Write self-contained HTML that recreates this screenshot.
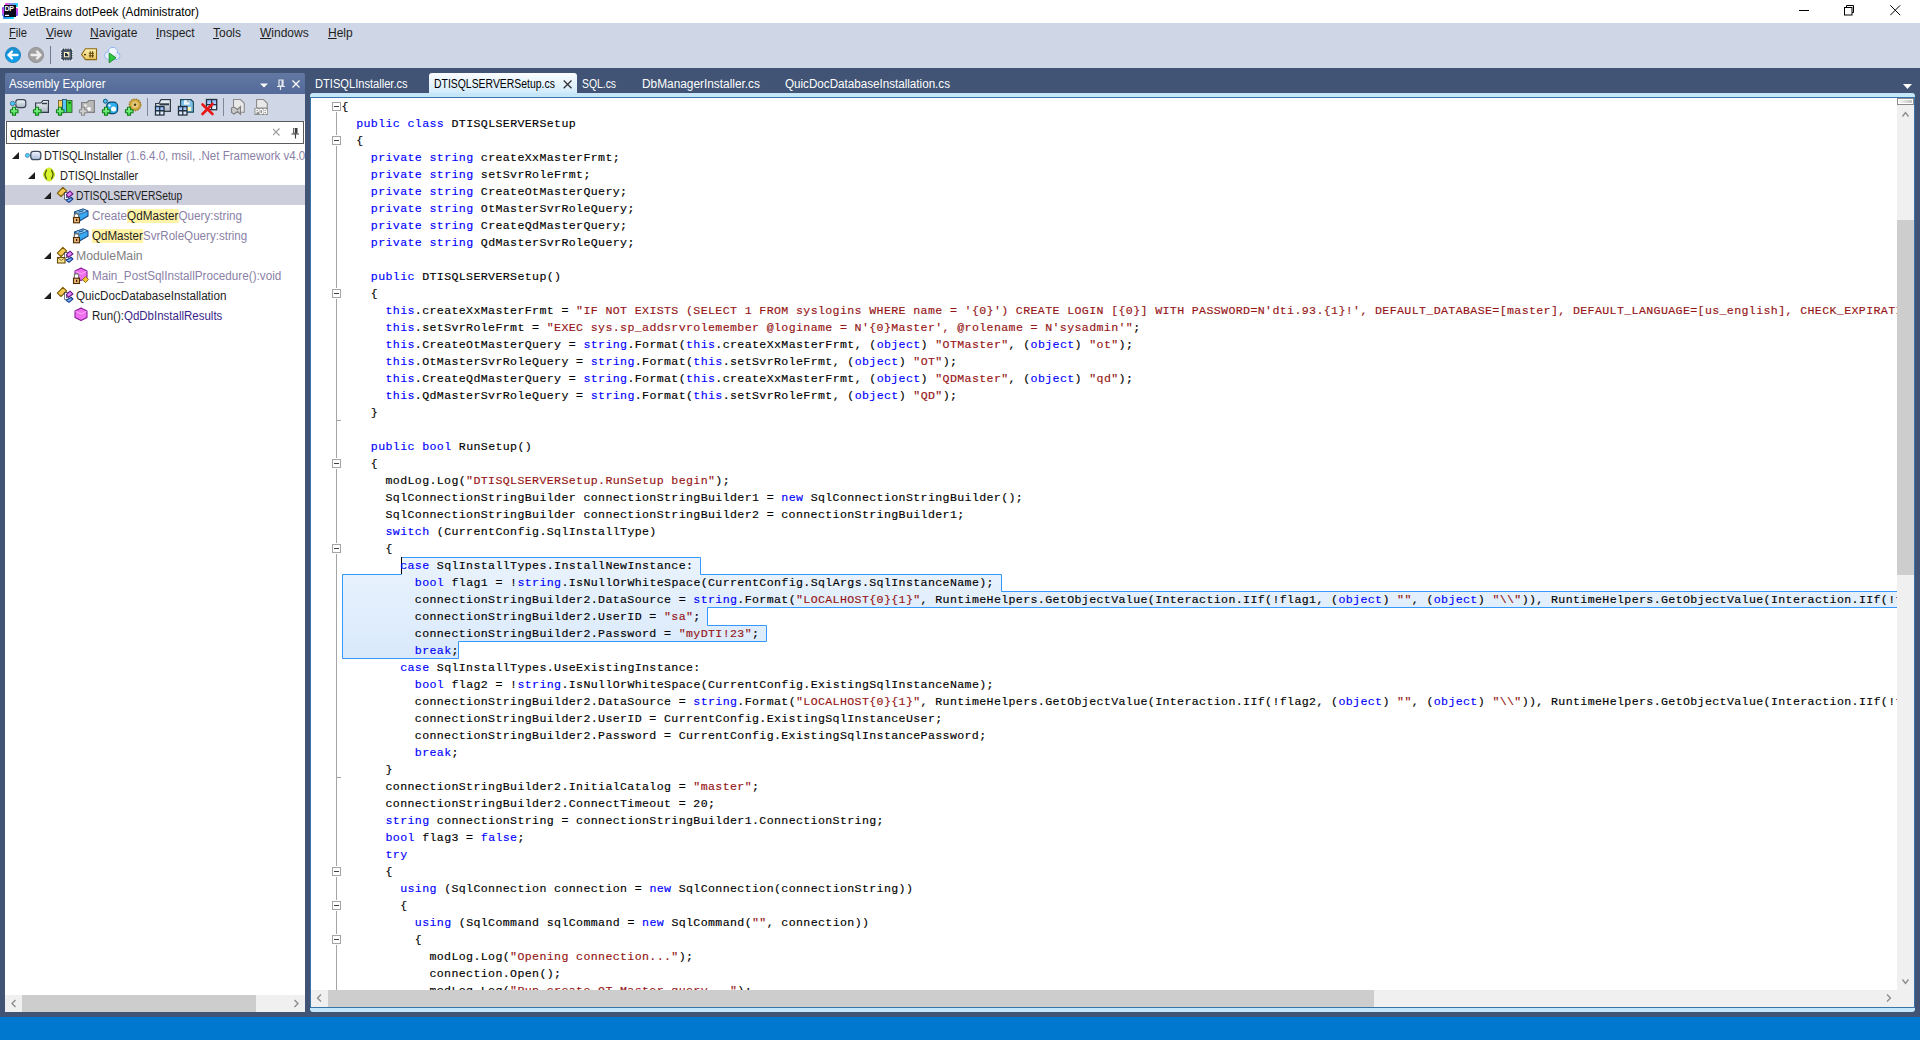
<!DOCTYPE html>
<html><head><meta charset="utf-8">
<style>
*{box-sizing:border-box}
html,body{margin:0;padding:0;overflow:hidden}
body{width:1920px;height:1040px;overflow:hidden;position:relative;background:#415475;font-family:"Liberation Sans",sans-serif;font-size:12px;color:#1e1e1e}
.a{position:absolute}
#title{left:0;top:0;width:1920px;height:23px;background:#fff}
#menubar{left:0;top:23px;width:1920px;height:45px;background:#cfd6e5}
#taskbar{left:0;top:1017px;width:1920px;height:23px;background:#0078d0}
.menu{position:absolute;top:26px;font-size:12px;color:#1e1e1e;white-space:nowrap}
.menu u{text-decoration:underline;text-decoration-thickness:1px;text-underline-offset:1px}
#panel{left:5px;top:73px;width:300px;height:939px;background:linear-gradient(transparent 0,transparent 21px,#fff 21px)}
#phead{left:0;top:0;width:300px;height:21px;background:linear-gradient(#6379a2,#52699a);border-radius:2px 2px 0 0}
#ptool{left:0;top:21px;width:300px;height:27px;background:#cfd6e5}
#search{left:1px;top:48px;width:298px;height:23px;border:1px solid #5c5c5c;background:#fff}
#tree{left:0;top:71px;width:300px;height:851px;background:#fff;overflow:hidden}
.row{position:absolute;left:0;width:300px;height:20px;white-space:nowrap}
.row .t{position:absolute;top:4px;font-size:12px}
.tri{position:absolute;width:0;height:0;border-left:7px solid transparent;border-bottom:7px solid #1e1e1e;top:7px}
.hl{background:#fff3a8}
.sx{display:inline-block;transform-origin:0 0;white-space:nowrap}
#edframe{left:310px;top:93px;width:1605px;height:919px;background:#c6e6fa;border-radius:3px}
#edin{left:310px;top:97px;width:1605px;height:911px;border:1px solid #3a73a9;background:#fff;overflow:hidden}
#code{position:absolute;left:30.5px;top:0px;font-family:"Liberation Mono",monospace;font-size:11.6px;letter-spacing:0.3725px;line-height:17px;white-space:pre;color:#000;-webkit-text-stroke:0.15px currentColor}
#code b{font-weight:normal;color:#0000ff}
#code i{font-style:normal;color:#951414}
.fb{position:absolute;width:9px;height:9px;border:1px solid #a5a5a5;background:#fff}
.fb:after{content:"";position:absolute;left:1px;top:3px;width:5px;height:1px;background:#404040}
.fl{position:absolute;width:1px;background:#a5a5a5}
.ft{position:absolute;width:5px;height:1px;background:#a5a5a5}
.tab{position:absolute;top:77px;font-size:12px;color:#fff;white-space:nowrap}
</style></head><body>
<div id="title" class="a">
  <svg class="a" style="left:0;top:0" width="22" height="22">
    <defs><linearGradient id="dp1" x1="0" y1="0" x2="1" y2="0"><stop offset="0" stop-color="#ff40e0"/><stop offset="1" stop-color="#10d8ff"/></linearGradient>
    <linearGradient id="dp2" x1="0" y1="0" x2="0" y2="1"><stop offset="0" stop-color="#8050ff"/><stop offset="0.5" stop-color="#e040f0"/><stop offset="1" stop-color="#6080ff"/></linearGradient>
    <linearGradient id="dp3" x1="0" y1="0" x2="0" y2="1"><stop offset="0" stop-color="#ff40e0"/><stop offset="1" stop-color="#7060ff"/></linearGradient>
    <linearGradient id="dp4" x1="0" y1="0" x2="1" y2="0"><stop offset="0" stop-color="#3080ff"/><stop offset="1" stop-color="#10e0ff"/></linearGradient></defs>
    <rect x="5" y="3" width="13" height="4" rx="1" fill="url(#dp1)"/>
    <rect x="2" y="7" width="3" height="9" rx="1" fill="url(#dp2)"/>
    <rect x="15" y="8" width="3" height="8" rx="1" fill="url(#dp3)"/>
    <rect x="3" y="15" width="11" height="4" rx="1" fill="url(#dp4)"/>
    <rect x="4" y="5" width="12" height="12" fill="#0c0a18"/>
    <text x="4.6" y="11.2" font-family="Liberation Sans" font-weight="bold" font-size="7" fill="#fff" textLength="9.4">DP</text>
    <rect x="5" y="14.8" width="4" height="1.2" fill="#fff"/>
  </svg>
  <div class="a" style="left:23px;top:5px;font-size:12px;color:#000;white-space:nowrap"><span class="sx" style="transform:scaleX(0.98)">JetBrains dotPeek (Administrator)</span></div>
  <div class="a" style="left:1799px;top:10px;width:10px;height:1px;background:#000"></div>
  <svg class="a" style="left:1844px;top:5px" width="11" height="11"><rect x="0.5" y="2.5" width="7.5" height="7.5" fill="none" stroke="#000"/><path d="M2.5 2.5 V0.5 H9.5 V7.5 H8" fill="none" stroke="#000"/></svg>
  <svg class="a" style="left:1890px;top:5px" width="11" height="11"><path d="M0.3 0.3 L10.2 10.2 M10.2 0.3 L0.3 10.2" stroke="#000" stroke-width="1"/></svg>
</div>
<div id="menubar" class="a"></div>
<div class="menu" style="left:9px"><span class="sx" style="transform:scaleX(0.93)"><u>F</u>ile</span></div>
<div class="menu" style="left:46px"><u>V</u>iew</div>
<div class="menu" style="left:90px"><u>N</u>avigate</div>
<div class="menu" style="left:156px"><u>I</u>nspect</div>
<div class="menu" style="left:213px"><u>T</u>ools</div>
<div class="menu" style="left:260px"><u>W</u>indows</div>
<div class="menu" style="left:328px"><u>H</u>elp</div>
<!-- main toolbar -->
<svg class="a" style="left:0;top:44px" width="130" height="22">
  <defs><linearGradient id="bk" x1="0" y1="0" x2="0" y2="1"><stop offset="0" stop-color="#1c8fd0"/><stop offset="1" stop-color="#0ca2f2"/></linearGradient>
  <linearGradient id="tg" x1="0" y1="0" x2="0" y2="1"><stop offset="0" stop-color="#fff0b0"/><stop offset="1" stop-color="#e8c860"/></linearGradient>
  <linearGradient id="cl" x1="0" y1="0" x2="0" y2="1"><stop offset="0" stop-color="#ffffff"/><stop offset="1" stop-color="#c8dcf8"/></linearGradient></defs>
  <circle cx="13" cy="11" r="7.6" fill="url(#bk)" stroke="#1479b8" stroke-width="0.8"/>
  <path d="M8.5 11 H17.5 M8.5 11 L12 7.5 M8.5 11 L12 14.5" stroke="#fff" stroke-width="2.3" fill="none" stroke-linecap="round" stroke-linejoin="round"/>
  <circle cx="36" cy="11" r="7.6" fill="#a0a0a0" stroke="#8a8a8a" stroke-width="0.8"/>
  <path d="M31.5 11 H40.5 M40.5 11 L37 7.5 M40.5 11 L37 14.5" stroke="#f0f0f0" stroke-width="2.3" fill="none" stroke-linecap="round" stroke-linejoin="round"/>
  <rect x="50" y="2" width="1" height="18" fill="#6e7a90"/>
  <rect x="60.6" y="4.5" width="12.3" height="12.3" fill="#f4f8fc" opacity="0.8"/>
  <path d="M63.5 4.5 V16.5 M65.8 4.5 V16.5 M68.1 4.5 V16.5 M70.4 4.5 V16.5" stroke="#2a3644" stroke-width="1.1"/>
  <path d="M61 7.2 H72.5 M61 9.5 H72.5 M61 11.8 H72.5 M61 14.1 H72.5" stroke="#2a3644" stroke-width="1.1"/>
  <rect x="62.2" y="5.9" width="9.2" height="9.2" fill="#4a5c6c" stroke="#2a3644" stroke-width="0.8"/>
  <rect x="64" y="8" width="5.4" height="5.2" fill="#fff0c0"/>
  <path d="M65 9 H66.5 L68.2 10.7 V12.2 H65 Z" fill="#1a2a3a"/>
  <path d="M81.5 10.5 L85.5 4.8 H96.5 V15.6 H85.5 Z" fill="url(#tg)" stroke="#8a6810" stroke-width="1.1" stroke-linejoin="round"/>
  <circle cx="85" cy="10.6" r="0.9" fill="#2a1a04"/>
  <path d="M90.2 7.2 V13.8 M92.6 7.2 V13.8 M88.8 9.3 H94 M88.8 11.8 H94" stroke="#5a4408" stroke-width="1"/>
  <circle cx="112.8" cy="8" r="4.6" fill="url(#cl)" stroke="#8ab0f0" stroke-width="1"/>
  <circle cx="108.2" cy="11.5" r="3.6" fill="url(#cl)" stroke="#8ab0f0" stroke-width="1"/>
  <circle cx="116.8" cy="12" r="3.2" fill="url(#cl)" stroke="#8ab0f0" stroke-width="1"/>
  <path d="M108.5 15.3 H117" stroke="#8ab0f0" stroke-width="1"/>
  <rect x="107" y="10.5" width="11" height="4.5" fill="#dce8fc"/>
  <circle cx="112.8" cy="8" r="4" fill="#f0f6ff"/><circle cx="108.2" cy="11.5" r="3" fill="#e4eefc"/><circle cx="116.8" cy="12" r="2.6" fill="#dde8fc"/>
  <path d="M109.2 9 L116 13.8 L109.2 18.8 Z" fill="#30c840" stroke="#148a24" stroke-width="0.9" stroke-linejoin="round"/>
</svg>
<div id="taskbar" class="a"></div>

<!-- Assembly explorer panel -->
<div id="panel" class="a">
  <div id="phead" class="a">
    <div class="a" style="left:4px;top:4px;color:#fff;font-size:12px;white-space:nowrap"><span class="sx" style="transform:scaleX(0.965)">Assembly Explorer</span></div>
    <svg class="a" style="left:250px;top:5px" width="50" height="14">
      <path d="M5 5.5 H13 L9 9.5 Z" fill="#fff"/>
      <path d="M24 2 H28 V8 H24 Z" stroke="#e8eaf0" stroke-width="1.2" fill="none"/><rect x="26.5" y="2" width="1.5" height="6" fill="#e8eaf0"/>
      <path d="M22 8.5 H30 M25.5 9 V12" stroke="#e8eaf0" stroke-width="1.2" fill="none"/>
      <path d="M37.5 2.5 L44.5 9.5 M44.5 2.5 L37.5 9.5" stroke="#fff" stroke-width="1.2"/>
    </svg>
  </div>
  <div id="ptool" class="a">
    <svg class="a" style="left:-5px;top:-1px" width="305" height="28">
    <defs><linearGradient id="pg" x1="0" y1="0" x2="0" y2="1"><stop offset="0" stop-color="#a8ffa8"/><stop offset="1" stop-color="#38d848"/></linearGradient>
    <linearGradient id="cg" x1="0" y1="0" x2="0" y2="1"><stop offset="0" stop-color="#7fb0ff"/><stop offset="1" stop-color="#ffffff"/></linearGradient>
    <linearGradient id="fg" x1="0" y1="0" x2="0" y2="1"><stop offset="0" stop-color="#f4f8fc"/><stop offset="1" stop-color="#a9b4c0"/></linearGradient>
    <radialGradient id="gg"><stop offset="0" stop-color="#fff2b0"/><stop offset="1" stop-color="#c09020"/></radialGradient></defs>
    <rect x="15.8" y="6.6" width="10" height="8" rx="2.5" fill="url(#fg)" stroke="#3a4654" stroke-width="1.2"/>
    <path d="M12.5 10.5 H16" stroke="#4ac8f0" stroke-width="1.2"/><circle cx="12.5" cy="10.5" r="2.2" fill="#40d0ff" stroke="#5a7090" stroke-width="1"/>
    <path d="M10.5 16.75 h2 v-2.5 h3 v2.5 h2.5 v3 h-2.5 v2.5 h-3 v-2.5 h-2 Z" fill="url(#pg)" stroke="#14801e" stroke-width="1.2" stroke-linejoin="round"/>
    <path d="M35.6 10 H41 L43 7.5 H48.4 V19.4 H35.6 Z" fill="url(#fg)" stroke="#303c48" stroke-width="1.2"/>
    <path d="M42 10.5 H47" stroke="#303c48" stroke-width="1.5"/>
    <path d="M33.5 16.75 h2 v-2.5 h3 v2.5 h2.5 v3 h-2.5 v2.5 h-3 v-2.5 h-2 Z" fill="url(#pg)" stroke="#14801e" stroke-width="1.2" stroke-linejoin="round"/>
    <rect x="58.4" y="7.5" width="4" height="11.5" fill="#ffd060" stroke="#6a5a20" stroke-width="0.8"/>
    <rect x="62.4" y="6.4" width="4" height="13" fill="#58c8f8" stroke="#2a4a5a" stroke-width="0.8"/>
    <rect x="66.6" y="7.4" width="5.4" height="12" fill="#40d040" stroke="#2a5a2a" stroke-width="0.8"/>
    <rect x="68.5" y="9" width="2" height="1.5" fill="#0a4a0a"/>
    <path d="M56.5 16.75 h2 v-2.5 h3 v2.5 h2.5 v3 h-2.5 v2.5 h-3 v-2.5 h-2 Z" fill="url(#pg)" stroke="#14801e" stroke-width="1.2" stroke-linejoin="round"/>
    <path d="M81.6 9.5 H87 L89 7.5 H94.4 V19.4 H81.6 Z" fill="#b8b8b8" stroke="#808080" stroke-width="1.2"/>
    <circle cx="85.5" cy="12.5" r="1.3" fill="#f0f0f0"/><circle cx="89" cy="16" r="2" fill="#f8f8f8"/>
    <path d="M79.5 16.75 h2 v-2.5 h3 v2.5 h2.5 v3 h-2.5 v2.5 h-3 v-2.5 h-2 Z" fill="#d0d0d0" stroke="#8c8c8c" stroke-width="1.2" stroke-linejoin="round"/>
    <rect x="106.6" y="9.2" width="11" height="11.4" rx="4" fill="#30b0f0" stroke="#0a4a70" stroke-width="1.2"/>
    <circle cx="113.5" cy="16" r="2.5" fill="#fff"/><circle cx="109.5" cy="12.5" r="1.2" fill="#fff"/>
    <circle cx="105.4" cy="8.2" r="2" fill="#50c0f0" stroke="#0a5a80" stroke-width="1"/>
    <path d="M102.5 16.75 h2 v-2.5 h3 v2.5 h2.5 v3 h-2.5 v2.5 h-3 v-2.5 h-2 Z" fill="url(#pg)" stroke="#14801e" stroke-width="1.2" stroke-linejoin="round"/>
    <circle cx="135" cy="11.8" r="5.8" fill="url(#gg)" stroke="#a07818" stroke-width="1.2" stroke-dasharray="1.5 1"/>
    <circle cx="135" cy="11.8" r="1.3" fill="#4a3a10"/>
    <path d="M125.5 16.75 h2 v-2.5 h3 v2.5 h2.5 v3 h-2.5 v2.5 h-3 v-2.5 h-2 Z" fill="url(#pg)" stroke="#14801e" stroke-width="1.2" stroke-linejoin="round"/>
    <rect x="147" y="5" width="1" height="18" fill="#7e889a"/>
    <path d="M155.6 10.5 H159 L161 6.6 H170.4 V18.4 H155.6 Z" fill="url(#fg)" stroke="#303c48" stroke-width="1.2"/>
    <path d="M159.5 11.3 H169" stroke="#303c48" stroke-width="2"/>
    <rect x="155.5" y="13.5" width="8.5" height="8.5" fill="url(#cg)" stroke="#23323c" stroke-width="1.3"/><path d="M159.75 13.5 V22 M155.5 17.75 H164" stroke="#23323c" stroke-width="1.3"/>
    <path d="M180.6 6.6 H191 L193.4 9 V19.2 H180.6 Z" fill="#80c0e8" stroke="#1a4a5a" stroke-width="1.2"/>
    <rect x="184" y="7.2" width="5.5" height="4.5" fill="#eaf2fa"/><rect x="187.5" y="7.2" width="1" height="2" fill="#606060"/><rect x="187" y="14" width="4" height="4" fill="#fff8b8"/>
    <rect x="178.5" y="13.5" width="8.5" height="8.5" fill="url(#cg)" stroke="#23323c" stroke-width="1.3"/><path d="M182.75 13.5 V22 M178.5 17.75 H187" stroke="#23323c" stroke-width="1.3"/>
    <rect x="206.5" y="6.5" width="10.2" height="10.2" fill="url(#cg)" stroke="#23323c" stroke-width="1.3"/><path d="M211.6 6.5 V16.7 M206.5 11.6 H216.7" stroke="#23323c" stroke-width="1.3"/>
    <path d="M202.5 11.5 L212.5 21 M212.5 11 L202.5 21" stroke="#e81818" stroke-width="2.6" stroke-linecap="round"/>
    <rect x="223" y="5" width="1" height="18" fill="#7e889a"/>
    <path d="M233.5 6.5 H240.5 L244.3 10.3 V19.3 H233.5 Z" fill="#e8e8e8" stroke="#8a8a8a" stroke-width="1.1"/>
    <path d="M231.5 15 L234 14 L237.5 16.5 L240.5 13.5 V21.3 L237.5 18.5 L234 21 L231.5 19.5 Z" fill="#c8c8c8" stroke="#808080" stroke-width="1.1"/>
    <path d="M256.6 6.5 H263.5 L267.3 10.3 V15 H256.6 Z" fill="#e8e8e8" stroke="#8a8a8a" stroke-width="1.1"/>
    <rect x="254.5" y="15" width="13.3" height="7" fill="#8a8a8a"/>
    <path d="M256 20.8 V16.4 H257.6 Q258.6 16.4 258.6 17.6 Q258.6 18.8 257.6 18.8 H256" stroke="#fff" stroke-width="1.1" fill="none"/><path d="M260 20.8 V16.4 H261.3 Q262.6 16.4 262.6 17.7 V19.5 Q262.6 20.8 261.3 20.8 Z" stroke="#fff" stroke-width="1.1" fill="none"/><path d="M264 20.8 V16.4 H265.6 Q266.5 16.4 266.5 17.4 Q266.5 18.5 265.6 18.5 H264 M265.6 18.5 Q266.7 18.5 266.7 19.6 Q266.7 20.8 265.7 20.8 H264" stroke="#fff" stroke-width="1.1" fill="none"/>
    </svg>
  </div>
  <div id="search" class="a">
    <div class="a" style="left:3px;top:4px;font-size:12px;color:#000"><span class="sx" style="transform:scaleX(0.993)">qdmaster</span></div>
    <svg class="a" style="left:266px;top:6px" width="30" height="12">
      <path d="M-0.5 0.5 L6.5 7.5 M6.5 0.5 L-0.5 7.5" stroke="#9a9a9a" stroke-width="1.2"/>
      <rect x="20" y="-0.5" width="4.5" height="6" fill="#3a3a3a"/><rect x="20.7" y="0.2" width="1.3" height="4.6" fill="#d8d8d8"/>
      <path d="M18.5 6 H26 M22.5 6.5 V10.5" stroke="#3a3a3a" stroke-width="1.1" fill="none"/>
    </svg>
  </div>
  <div id="tree" class="a">
  <div class="row" style="top:1px;"><div class="tri" style="left:7px"></div><svg class="a" style="left:19px;top:0" width="20" height="20"><defs><linearGradient id="ag" x1="0" y1="0" x2="0" y2="1"><stop offset="0" stop-color="#f4f8ff"/><stop offset="1" stop-color="#a8b8d8"/></linearGradient></defs><path d="M3.5 10.5 H7" stroke="#40c8f0" stroke-width="1.2"/><circle cx="3.4" cy="10.4" r="2" fill="#40d8ff" stroke="#6a88b0" stroke-width="1"/><rect x="6.8" y="6.3" width="10" height="8.4" rx="2.6" fill="url(#ag)" stroke="#404c5c" stroke-width="1.3"/></svg><div class="t" style="left:39px"><span class="sx" style="transform:scaleX(0.917)">DTISQLInstaller</span></div><div class="t" style="left:121px"><span class="sx" style="transform:scaleX(0.96)"><span style="color:#8a7fa6">(1.6.4.0, msil, .Net Framework v4.0</span></span></div></div>
<div class="row" style="top:21px;"><div class="tri" style="left:23px"></div><svg class="a" style="left:37px;top:0" width="20" height="20"><path d="M1.2 9.5 C2.5 5 4.5 3 7 3 C9.5 3 11.5 5 12.8 9.5 C11.5 14 9.5 16 7 16 C4.5 16 2.5 14 1.2 9.5 Z" fill="#d8f428" stroke="#c0dc20" stroke-width="0.8"/><path d="M4.6 4.8 L2.8 9.5 L4.6 14.2 M9.4 4.8 L11.2 9.5 L9.4 14.2" stroke="#3a4a10" stroke-width="1.1" fill="none"/></svg><div class="t" style="left:55px"><span class="sx" style="transform:scaleX(0.917)">DTISQLInstaller</span></div></div>
<div class="row" style="top:41px;background:#cccedb"><div class="tri" style="left:39px"></div><svg class="a" style="left:51px;top:0" width="20" height="20"><path d="M6.9 2.3 L10.7 5.8 L5 11.5 L1.3 8.1 Z" fill="#f2c850" stroke="#7a5a08" stroke-width="1.1" stroke-linejoin="round"/><path d="M11.8 8.3 H9.6 V13.6 H12" stroke="#1a2a4a" stroke-width="2.4" fill="none"/><path d="M11.8 8.3 H9.6 V13.6 H12" stroke="#fff" stroke-width="1.2" fill="none"/><path d="M14 6.2 L16.9 9 L12.5 12.3 L10.3 9.6 Z" fill="#e88af8" stroke="#6a1a8a" stroke-width="1.1" stroke-linejoin="round"/><path d="M15.3 12.3 L16.9 14 L13 17.3 L10.2 15.2 Z" fill="#78b8f8" stroke="#1a3a8a" stroke-width="1.1" stroke-linejoin="round"/></svg><div class="t" style="left:71px"><span class="sx" style="transform:scaleX(0.858)">DTISQLSERVERSetup</span></div></div>
<div class="row" style="top:61px;"><svg class="a" style="left:67px;top:0" width="20" height="20"><path d="M2.5 7 L11 4 L16 6 L16 11 L7.5 16 L2.5 14 Z" fill="#38a8f0" stroke="#1a4a8a" stroke-width="1.1" stroke-linejoin="round"/><path d="M2.5 7 L11 4 L16 6 L7.5 9 Z" fill="#a8e4ff" stroke="#1a4a8a" stroke-width="0.8" stroke-linejoin="round"/><path d="M6.5 7.2 L11.5 5.6" stroke="#1a5a9a" stroke-width="1.4"/><path d="M2.3 12.5 V10.8 A2.2 2.2 0 0 1 6.7 10.8 V12.5" stroke="#707070" stroke-width="1.1" fill="#fff"/><rect x="1.5" y="12.5" width="6" height="5.3" fill="#eab070" stroke="#4a3008" stroke-width="1.1"/><rect x="4" y="14" width="1.2" height="2" fill="#2a1a04"/></svg><div class="t" style="left:87px"><span class="sx" style="transform:scaleX(0.974)"><span style="color:#8a7fa6">Create</span><span class="hl">QdMaster</span><span style="color:#8a7fa6">Query:string</span></span></div></div>
<div class="row" style="top:81px;"><svg class="a" style="left:67px;top:0" width="20" height="20"><path d="M2.5 7 L11 4 L16 6 L16 11 L7.5 16 L2.5 14 Z" fill="#38a8f0" stroke="#1a4a8a" stroke-width="1.1" stroke-linejoin="round"/><path d="M2.5 7 L11 4 L16 6 L7.5 9 Z" fill="#a8e4ff" stroke="#1a4a8a" stroke-width="0.8" stroke-linejoin="round"/><path d="M6.5 7.2 L11.5 5.6" stroke="#1a5a9a" stroke-width="1.4"/><path d="M2.3 12.5 V10.8 A2.2 2.2 0 0 1 6.7 10.8 V12.5" stroke="#707070" stroke-width="1.1" fill="#fff"/><rect x="1.5" y="12.5" width="6" height="5.3" fill="#eab070" stroke="#4a3008" stroke-width="1.1"/><rect x="4" y="14" width="1.2" height="2" fill="#2a1a04"/></svg><div class="t" style="left:87px"><span class="sx" style="transform:scaleX(0.966)"><span class="hl">QdMaster</span><span style="color:#8a7fa6">SvrRoleQuery:string</span></span></div></div>
<div class="row" style="top:101px;"><div class="tri" style="left:39px"></div><svg class="a" style="left:51px;top:0" width="20" height="20"><path d="M6.9 2.3 L10.7 5.8 L5 11.5 L1.3 8.1 Z" fill="#f2c850" stroke="#7a5a08" stroke-width="1.1" stroke-linejoin="round"/><path d="M11.8 8.3 H9.6 V13.6 H12" stroke="#1a2a4a" stroke-width="2.4" fill="none"/><path d="M11.8 8.3 H9.6 V13.6 H12" stroke="#fff" stroke-width="1.2" fill="none"/><path d="M14 6.2 L16.9 9 L12.5 12.3 L10.3 9.6 Z" fill="#e88af8" stroke="#6a1a8a" stroke-width="1.1" stroke-linejoin="round"/><path d="M15.3 12.3 L16.9 14 L13 17.3 L10.2 15.2 Z" fill="#78b8f8" stroke="#1a3a8a" stroke-width="1.1" stroke-linejoin="round"/><rect x="1.5" y="12.5" width="7.5" height="5.5" fill="#f8e890" stroke="#6a4810" stroke-width="1.1"/><path d="M2 13 L5.25 15.5 L8.5 13" stroke="#6a4810" stroke-width="0.8" fill="none"/></svg><div class="t" style="left:71px"><span class="sx" style="transform:scaleX(1.02)"><span style="color:#808080">ModuleMain</span></span></div></div>
<div class="row" style="top:121px;"><svg class="a" style="left:67px;top:0" width="20" height="20"><path d="M9 3 L15 6 V12.5 L9 15.5 L3 12.5 V6 Z" fill="#f070f0" stroke="#8a1a9a" stroke-width="1.1" stroke-linejoin="round"/><path d="M3.5 6.3 L9 9 L14.5 6.3" stroke="#ffc0ff" stroke-width="0.8" fill="none"/><path d="M2.3 13.2 V10.8 A2.2 2.2 0 0 1 6.7 10.8 V13.2" stroke="#707070" stroke-width="1.1" fill="#fff"/><rect x="1.5" y="13.2" width="6" height="5.3" fill="#eab070" stroke="#4a3008" stroke-width="1.1"/><rect x="4" y="14.8" width="1.2" height="2" fill="#2a1a04"/><path d="M10.5 14.6 L13.5 11.6 L16.5 14.6 L13.5 17.6 Z" fill="#f4c830" stroke="#8a6810" stroke-width="1"/></svg><div class="t" style="left:87px"><span class="sx" style="transform:scaleX(0.975)"><span style="color:#8a7fa6">Main_PostSqlInstallProcedure():void</span></span></div></div>
<div class="row" style="top:141px;"><div class="tri" style="left:39px"></div><svg class="a" style="left:51px;top:0" width="20" height="20"><path d="M6.9 2.3 L10.7 5.8 L5 11.5 L1.3 8.1 Z" fill="#f2c850" stroke="#7a5a08" stroke-width="1.1" stroke-linejoin="round"/><path d="M11.8 8.3 H9.6 V13.6 H12" stroke="#1a2a4a" stroke-width="2.4" fill="none"/><path d="M11.8 8.3 H9.6 V13.6 H12" stroke="#fff" stroke-width="1.2" fill="none"/><path d="M14 6.2 L16.9 9 L12.5 12.3 L10.3 9.6 Z" fill="#e88af8" stroke="#6a1a8a" stroke-width="1.1" stroke-linejoin="round"/><path d="M15.3 12.3 L16.9 14 L13 17.3 L10.2 15.2 Z" fill="#78b8f8" stroke="#1a3a8a" stroke-width="1.1" stroke-linejoin="round"/></svg><div class="t" style="left:71px"><span class="sx" style="transform:scaleX(0.972)">QuicDocDatabaseInstallation</span></div></div>
<div class="row" style="top:161px;"><svg class="a" style="left:67px;top:0" width="20" height="20"><path d="M9 3 L15 6 V12.5 L9 15.5 L3 12.5 V6 Z" fill="#f070f0" stroke="#8a1a9a" stroke-width="1.1" stroke-linejoin="round"/><path d="M3.5 6.3 L9 9 L14.5 6.3" stroke="#ffc0ff" stroke-width="0.8" fill="none"/></svg><div class="t" style="left:87px"><span class="sx" style="transform:scaleX(0.958)">Run():<span style="color:#3a1f8a">QdDbInstallResults</span></span></div></div>
  </div>
  <!-- h scroll -->
  <div class="a" style="left:0;top:922px;width:300px;height:17px;background:#f0f0f0"></div>
  <div class="a" style="left:17px;top:922px;width:234px;height:17px;background:#cdcdcd"></div>
  <svg class="a" style="left:0;top:922px" width="300" height="17"><path d="M10.5 5 L7 8.5 L10.5 12" stroke="#8a8a8a" fill="none" stroke-width="1.3"/><path d="M289.5 5 L293 8.5 L289.5 12" stroke="#8a8a8a" fill="none" stroke-width="1.3"/></svg>
</div>

<!-- tabs -->
<div class="a" style="left:429px;top:73px;width:148px;height:22px;background:linear-gradient(#fbfdff,#cde9fb);border-radius:3px 3px 0 0"></div>
<div class="tab" style="left:315px"><span class="sx" style="transform:scaleX(0.926)">DTISQLInstaller.cs</span></div>
<div class="tab" style="left:434px;color:#000"><span class="sx" style="transform:scaleX(0.869)">DTISQLSERVERSetup.cs</span></div>
<svg class="a" style="left:563px;top:80px" width="10" height="9"><path d="M0.7 0.5 L8.5 8.3 M8.5 0.5 L0.7 8.3" stroke="#333" stroke-width="1.3"/></svg>
<div class="tab" style="left:582px"><span class="sx" style="transform:scaleX(0.864)">SQL.cs</span></div>
<div class="tab" style="left:642px"><span class="sx" style="transform:scaleX(0.988)">DbManagerInstaller.cs</span></div>
<div class="tab" style="left:785px"><span class="sx" style="transform:scaleX(0.97)">QuicDocDatabaseInstallation.cs</span></div>
<svg class="a" style="left:1903px;top:84px" width="12" height="6"><path d="M0 0 H9 L4.5 5 Z" fill="#fff"/></svg>

<!-- editor -->
<div id="edframe" class="a"></div>
<div id="edin" class="a">
  <svg class="a" style="left:0;top:0" width="1590" height="909"><defs><linearGradient id="selg" gradientUnits="userSpaceOnUse" x1="0" y1="459" x2="0" y2="561"><stop offset="0" stop-color="#eaf3fd"/><stop offset="1" stop-color="#d9e9fb"/></linearGradient></defs><polygon points="90.5,459.5 389.5,459.5 389.5,476.5 690.5,476.5 690.5,493.5 1589.0,493.5 1589.0,509.5 396.5,509.5 396.5,527.5 455.5,527.5 455.5,543.5 147.5,543.5 147.5,560.5 31.5,560.5 31.5,476.5 90.5,476.5" fill="url(#selg)" stroke="#3399ff" stroke-width="1"/><rect x="90" y="459" width="1" height="17" fill="#000"/></svg>
  <div class="fb" style="left:21px;top:4px"></div>
<div class="fb" style="left:21px;top:38px"></div>
<div class="fb" style="left:21px;top:191px"></div>
<div class="fb" style="left:21px;top:361px"></div>
<div class="fb" style="left:21px;top:446px"></div>
<div class="fb" style="left:21px;top:769px"></div>
<div class="fb" style="left:21px;top:803px"></div>
<div class="fb" style="left:21px;top:837px"></div>
<div class="fl" style="left:25px;top:14px;height:23px"></div>
<div class="fl" style="left:25px;top:48px;height:142px"></div>
<div class="fl" style="left:25px;top:201px;height:159px"></div>
<div class="fl" style="left:25px;top:371px;height:74px"></div>
<div class="fl" style="left:25px;top:456px;height:312px"></div>
<div class="fl" style="left:25px;top:779px;height:23px"></div>
<div class="fl" style="left:25px;top:813px;height:23px"></div>
<div class="fl" style="left:25px;top:847px;height:45px"></div>
<div class="ft" style="left:25px;top:322px"></div>
<div class="ft" style="left:25px;top:679px"></div>
  <div id="code">{
  <b>public</b> <b>class</b> DTISQLSERVERSetup
  {
    <b>private</b> <b>string</b> createXxMasterFrmt;
    <b>private</b> <b>string</b> setSvrRoleFrmt;
    <b>private</b> <b>string</b> CreateOtMasterQuery;
    <b>private</b> <b>string</b> OtMasterSvrRoleQuery;
    <b>private</b> <b>string</b> CreateQdMasterQuery;
    <b>private</b> <b>string</b> QdMasterSvrRoleQuery;

    <b>public</b> DTISQLSERVERSetup()
    {
      <b>this</b>.createXxMasterFrmt = <i>"IF NOT EXISTS (SELECT 1 FROM syslogins WHERE name = '{0}') CREATE LOGIN [{0}] WITH PASSWORD=N'dti.93.{1}!', DEFAULT_DATABASE=[master], DEFAULT_LANGUAGE=[us_english], CHECK_EXPIRATION=OFF, CHECK_POLICY=OFF"</i>;
      <b>this</b>.setSvrRoleFrmt = <i>"EXEC sys.sp_addsrvrolemember @loginame = N'{0}Master', @rolename = N'sysadmin'"</i>;
      <b>this</b>.CreateOtMasterQuery = <b>string</b>.Format(<b>this</b>.createXxMasterFrmt, (<b>object</b>) <i>"OTMaster"</i>, (<b>object</b>) <i>"ot"</i>);
      <b>this</b>.OtMasterSvrRoleQuery = <b>string</b>.Format(<b>this</b>.setSvrRoleFrmt, (<b>object</b>) <i>"OT"</i>);
      <b>this</b>.CreateQdMasterQuery = <b>string</b>.Format(<b>this</b>.createXxMasterFrmt, (<b>object</b>) <i>"QDMaster"</i>, (<b>object</b>) <i>"qd"</i>);
      <b>this</b>.QdMasterSvrRoleQuery = <b>string</b>.Format(<b>this</b>.setSvrRoleFrmt, (<b>object</b>) <i>"QD"</i>);
    }

    <b>public</b> <b>bool</b> RunSetup()
    {
      modLog.Log(<i>"DTISQLSERVERSetup.RunSetup begin"</i>);
      SqlConnectionStringBuilder connectionStringBuilder1 = <b>new</b> SqlConnectionStringBuilder();
      SqlConnectionStringBuilder connectionStringBuilder2 = connectionStringBuilder1;
      <b>switch</b> (CurrentConfig.SqlInstallType)
      {
        <b>case</b> SqlInstallTypes.InstallNewInstance:
          <b>bool</b> flag1 = !<b>string</b>.IsNullOrWhiteSpace(CurrentConfig.SqlArgs.SqlInstanceName);
          connectionStringBuilder2.DataSource = <b>string</b>.Format(<i>"LOCALHOST{0}{1}"</i>, RuntimeHelpers.GetObjectValue(Interaction.IIf(!flag1, (<b>object</b>) <i>""</i>, (<b>object</b>) <i>"\\"</i>)), RuntimeHelpers.GetObjectValue(Interaction.IIf(!flag1, (<b>object</b>) <i>""</i>, (<b>object</b>) CurrentConfig.SqlArgs.SqlInstanceName)));
          connectionStringBuilder2.UserID = <i>"sa"</i>;
          connectionStringBuilder2.Password = <i>"myDTI!23"</i>;
          <b>break</b>;
        <b>case</b> SqlInstallTypes.UseExistingInstance:
          <b>bool</b> flag2 = !<b>string</b>.IsNullOrWhiteSpace(CurrentConfig.ExistingSqlInstanceName);
          connectionStringBuilder2.DataSource = <b>string</b>.Format(<i>"LOCALHOST{0}{1}"</i>, RuntimeHelpers.GetObjectValue(Interaction.IIf(!flag2, (<b>object</b>) <i>""</i>, (<b>object</b>) <i>"\\"</i>)), RuntimeHelpers.GetObjectValue(Interaction.IIf(!flag2, (<b>object</b>) <i>""</i>, (<b>object</b>) CurrentConfig.ExistingSqlInstanceName)));
          connectionStringBuilder2.UserID = CurrentConfig.ExistingSqlInstanceUser;
          connectionStringBuilder2.Password = CurrentConfig.ExistingSqlInstancePassword;
          <b>break</b>;
      }
      connectionStringBuilder2.InitialCatalog = <i>"master"</i>;
      connectionStringBuilder2.ConnectTimeout = 20;
      <b>string</b> connectionString = connectionStringBuilder1.ConnectionString;
      <b>bool</b> flag3 = <b>false</b>;
      <b>try</b>
      {
        <b>using</b> (SqlConnection connection = <b>new</b> SqlConnection(connectionString))
        {
          <b>using</b> (SqlCommand sqlCommand = <b>new</b> SqlCommand(<i>""</i>, connection))
          {
            modLog.Log(<i>"Opening connection..."</i>);
            connection.Open();
            modLog.Log(<i>"Run create OT Master query..."</i>);</div>
  <!-- v scroll -->
  <div class="a" style="left:1586px;top:0;width:17px;height:910px;background:#f0f0f0"></div>
  <div class="a" style="left:1586px;top:0px;width:17px;height:7px;border:1px solid #8a8a8a;background:#fff"><div class="a" style="left:1px;top:1px;width:13px;height:3px;background:linear-gradient(90deg,#f4f4f4,#c4c4c4)"></div></div>
  <div class="a" style="left:1586px;top:122px;width:17px;height:355px;background:#cdcdcd"></div>
  <svg class="a" style="left:1586px;top:0" width="17" height="910">
    <path d="M5.5 18.5 L8.5 14.5 L11.5 18.5" stroke="#8a8a8a" fill="none" stroke-width="1.3"/>
    <path d="M5.5 881.5 L8.5 885.5 L11.5 881.5" stroke="#8a8a8a" fill="none" stroke-width="1.3"/>
  </svg>
  <!-- h scroll -->
  <div class="a" style="left:0;top:892px;width:1586px;height:17px;background:#f0f0f0"></div>
  <div class="a" style="left:17px;top:892px;width:1046px;height:17px;background:#cdcdcd"></div>
  <svg class="a" style="left:0;top:892px" width="1586" height="17">
    <path d="M10 4.5 L6.5 8 L10 11.5" stroke="#8a8a8a" fill="none" stroke-width="1.3"/>
    <path d="M1576 4.5 L1579.5 8 L1576 11.5" stroke="#8a8a8a" fill="none" stroke-width="1.3"/>
  </svg>
</div>
</body></html>
